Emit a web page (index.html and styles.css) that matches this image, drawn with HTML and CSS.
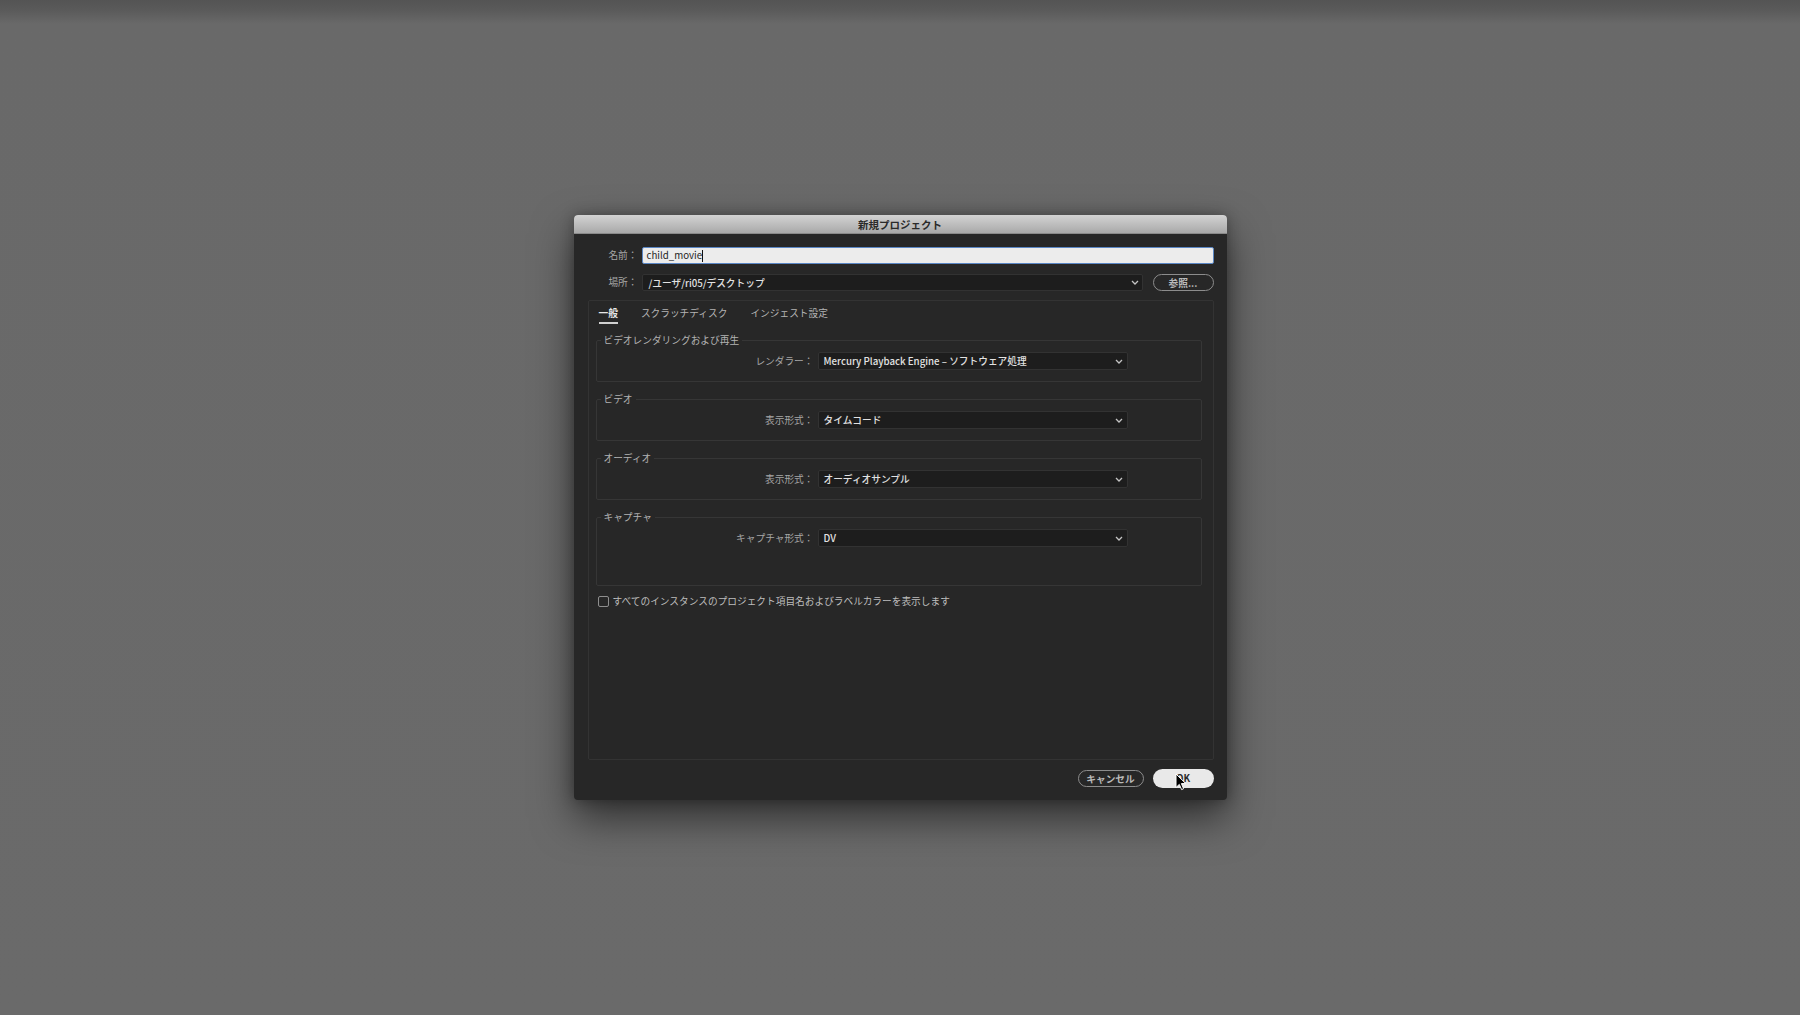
FILE: index.html
```html
<!DOCTYPE html>
<html lang="ja">
<head>
<meta charset="utf-8">
<title>新規プロジェクト</title>
<link rel="stylesheet" href="styles.css">
</head>
<body>
<div class="desktop">
  <div class="dialog">
    <div class="titlebar">新規プロジェクト</div>
    <div class="dialog-body">
      <div class="field-row name-row">
        <span class="field-label">名前：</span>
        <div class="text-input"><span class="input-text">child_movie</span><span class="caret"></span></div>
      </div>
      <div class="field-row loc-row">
        <span class="field-label">場所：</span>
        <div class="select loc-select">
          <span class="select-value">/ユーザ/ri05/デスクトップ</span>
          <svg class="chevron" width="8" height="5" viewBox="0 0 8 5"><path d="M1 1 L4 4 L7 1"/></svg>
        </div>
        <button class="pill-btn browse">参照...</button>
      </div>
      <div class="tab-panel">
        <div class="tabs">
          <span class="tab active">一般</span>
          <span class="tab">スクラッチディスク</span>
          <span class="tab">インジェスト設定</span>
        </div>
        <fieldset class="group first-group">
          <legend>ビデオレンダリングおよび再生</legend>
          <div class="setting-row">
            <span class="setting-label">レンダラー：</span>
            <div class="select setting-select">
              <span class="select-value">Mercury Playback Engine – ソフトウェア処理</span>
              <svg class="chevron" width="8" height="5" viewBox="0 0 8 5"><path d="M1 1 L4 4 L7 1"/></svg>
            </div>
          </div>
        </fieldset>
        <fieldset class="group">
          <legend>ビデオ</legend>
          <div class="setting-row">
            <span class="setting-label">表示形式：</span>
            <div class="select setting-select">
              <span class="select-value">タイムコード</span>
              <svg class="chevron" width="8" height="5" viewBox="0 0 8 5"><path d="M1 1 L4 4 L7 1"/></svg>
            </div>
          </div>
        </fieldset>
        <fieldset class="group">
          <legend>オーディオ</legend>
          <div class="setting-row">
            <span class="setting-label">表示形式：</span>
            <div class="select setting-select">
              <span class="select-value">オーディオサンプル</span>
              <svg class="chevron" width="8" height="5" viewBox="0 0 8 5"><path d="M1 1 L4 4 L7 1"/></svg>
            </div>
          </div>
        </fieldset>
        <fieldset class="group group-tall">
          <legend>キャプチャ</legend>
          <div class="setting-row">
            <span class="setting-label">キャプチャ形式：</span>
            <div class="select setting-select">
              <span class="select-value">DV</span>
              <svg class="chevron" width="8" height="5" viewBox="0 0 8 5"><path d="M1 1 L4 4 L7 1"/></svg>
            </div>
          </div>
        </fieldset>
        <div class="check-row">
          <span class="checkbox"></span>
          <span class="check-label">すべてのインスタンスのプロジェクト項目名およびラベルカラーを表示します</span>
        </div>
      </div>
      <div class="button-row">
        <button class="pill-btn cancel">キャンセル</button>
        <button class="ok-btn">OK
          <svg class="cursor" width="12" height="18" viewBox="0 0 12 18"><path d="M1 1 L1 14.5 L4.3 11.4 L6.6 16.6 L8.6 15.7 L6.4 10.6 L10.8 10.6 Z"/></svg>
        </button>
      </div>
    </div>
  </div>
</div>
</body>
</html>
```

FILE: styles.css
```css
* { box-sizing: border-box; }

html, body {
  margin: 0;
  padding: 0;
}

body {
  width: 1800px;
  height: 1015px;
  overflow: hidden;
  background: linear-gradient(to bottom, #545454 0px, #5a5a5a 10px, #696969 24px, #6a6a6a 100%);
  font-family: "Noto Sans CJK JP", "Noto Sans", sans-serif;
  font-size: 9.7px;
}

.desktop {
  width: 1800px;
  height: 1015px;
  display: flex;
  align-items: center;
  justify-content: center;
}

.dialog {
  width: 653px;
  height: 585px;
  background: #272727;
  border-radius: 4px;
  box-shadow: 0 18px 40px rgba(0, 0, 0, 0.55), 0 0 14px rgba(0, 0, 0, 0.3);
  display: flex;
  flex-direction: column;
}

.titlebar {
  height: 19px;
  line-height: 19px;
  text-align: center;
  font-size: 10.5px;
  font-weight: 700;
  color: #2a2a2a;
  background: linear-gradient(to bottom, #d3d3d3, #a9a9a9);
  border-radius: 4px 4px 0 0;
  border-bottom: 1px solid #8a8a8a;
}

.dialog-body {
  flex: 1;
  padding: 13px 13px 12px 14px;
  display: flex;
  flex-direction: column;
}

.field-row {
  display: flex;
  align-items: center;
  height: 17px;
}

.loc-row {
  margin-top: 10px;
}

.field-label {
  width: 50px;
  flex: 0 0 50px;
  text-align: right;
  color: #a6a6a6;
  margin-right: 4px;
  line-height: 17px;
}

.text-input {
  flex: 1;
  height: 17px;
  background: #ececec;
  border: 1px solid #5a86c4;
  border-radius: 2px;
  padding-left: 4px;
  display: flex;
  align-items: center;
  color: #1e1e1e;
}

.input-text {
  line-height: 15px;
}

.caret {
  width: 1px;
  height: 12px;
  background: #111;
}

.select {
  height: 18px;
  background: #1d1d1d;
  border: 1px solid #323232;
  border-radius: 2px;
  padding: 0 4px 0 5px;
  display: flex;
  align-items: center;
  justify-content: space-between;
}

.select-value {
  color: #e2e2e2;
  font-weight: 500;
  white-space: nowrap;
  line-height: 16px;
}

.chevron {
  flex: 0 0 auto;
}

.chevron path {
  fill: none;
  stroke: #c4c4c4;
  stroke-width: 1.3;
}

.loc-select {
  flex: 1;
  height: 17px;
  padding-left: 6px;
  padding-right: 3px;
}

.pill-btn {
  font-family: inherit;
  font-size: 9.7px;
  font-weight: 700;
  color: #b9b9b9;
  background: transparent;
  border: 1.5px solid #8c8c8c;
  border-radius: 9px;
  padding: 0;
  height: 17px;
  line-height: 14px;
}

.browse {
  width: 61px;
  margin-left: 10px;
}

.tab-panel {
  margin-top: 9px;
  height: 460px;
  border: 1px solid #333333;
  border-radius: 2px;
  padding: 0 11px 0 7px;
  display: flex;
  flex-direction: column;
}

.tabs {
  display: flex;
  gap: 23px;
  margin-left: 3px;
  padding-top: 5px;
}

.tab {
  line-height: 14px;
  padding-bottom: 2px;
  border-bottom: 2px solid transparent;
  color: #b4b4b4;
}

.tab.active {
  color: #e6e6e6;
  font-weight: 700;
  border-bottom-color: #d0d0d0;
}

.group {
  margin: 11px 0 0;
  padding: 0;
  border: 1px solid #363636;
  border-radius: 2px;
  min-width: 0;
}

.first-group {
  margin-top: 10px;
}

.group legend {
  margin-left: 4px;
  padding: 0 3px;
  line-height: 12px;
  color: #b3b3b3;
}

.setting-row {
  display: flex;
  align-items: center;
  padding: 6px 0 11px;
}

.group-tall .setting-row {
  padding-bottom: 38px;
}

.setting-label {
  width: 217px;
  flex: 0 0 217px;
  text-align: right;
  color: #a6a6a6;
  margin-right: 4px;
}

.setting-select {
  width: 310px;
}

.check-row {
  margin-top: 9px;
  margin-left: 2px;
  display: flex;
  align-items: center;
  gap: 4px;
}

.checkbox {
  width: 11px;
  height: 11px;
  border: 1px solid #8e8e8e;
  border-radius: 2px;
}

.check-label {
  color: #bdbdbd;
  line-height: 12px;
}

.button-row {
  margin-top: 9px;
  display: flex;
  justify-content: flex-end;
  align-items: center;
  gap: 9px;
}

.cancel {
  width: 66px;
}

.ok-btn {
  position: relative;
  width: 61px;
  height: 19px;
  padding: 0;
  border: none;
  border-radius: 10px;
  background: #e9e9e9;
  color: #2c2c2c;
  font-family: inherit;
  font-size: 9.7px;
  font-weight: 700;
  line-height: 19px;
}

.cursor {
  position: absolute;
  left: 22px;
  top: 4px;
}

.cursor path {
  fill: #000;
  stroke: #fff;
  stroke-width: 1;
  stroke-linejoin: round;
}
```
